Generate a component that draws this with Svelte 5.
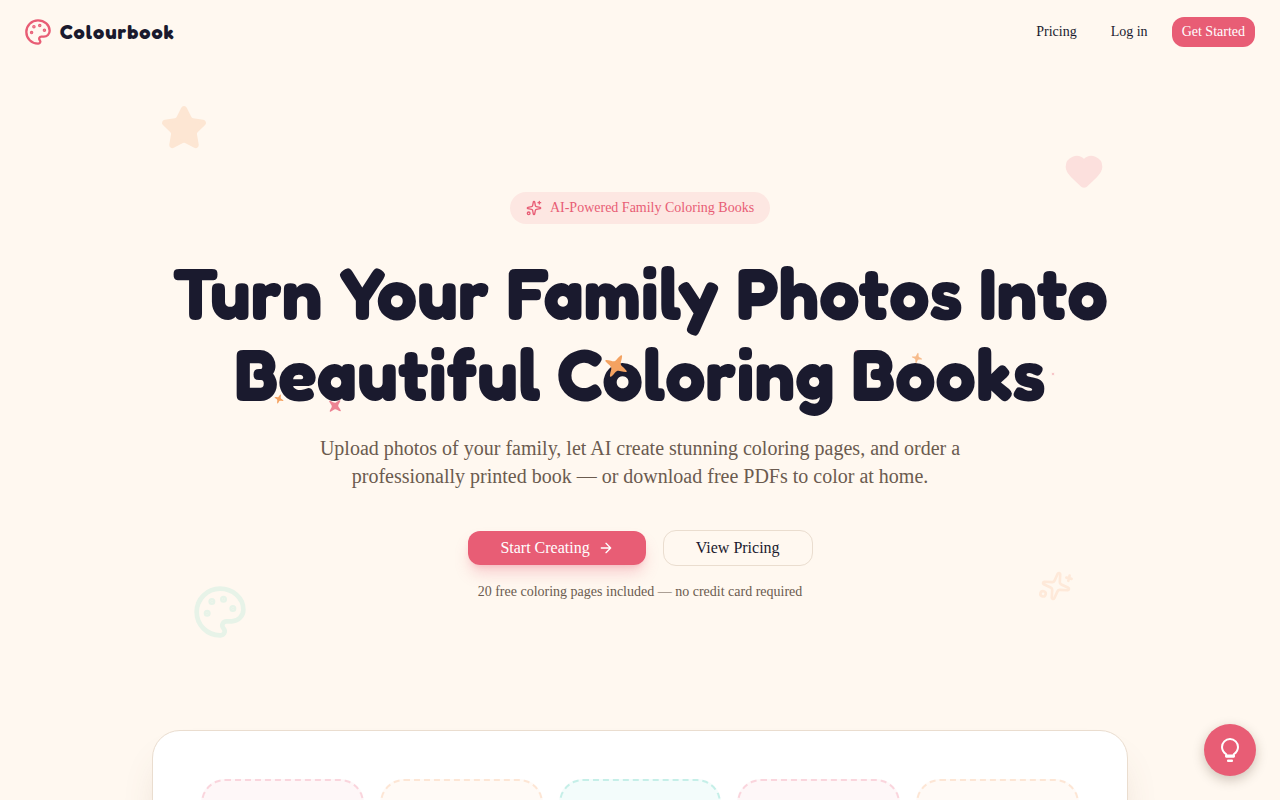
<script lang="ts">
    type Sparkle = {
        x: number
        y: number
        size: number
        angle: number
        tone: string
        opacity: number
    }

    // positions are percentages of the heading box
    const sparkles: Sparkle[] = [
        { x: 47.5, y: 70.4, size: 25, angle: 28, tone: "orange", opacity: 1 },
        { x: 13, y: 90.8, size: 10, angle: 20, tone: "orange", opacity: 1 },
        { x: 18.8, y: 95.1, size: 16, angle: 42, tone: "pink", opacity: 0.75 },
        { x: 78.4, y: 65.5, size: 11, angle: 12, tone: "orange", opacity: 0.7 },
        { x: 92.3, y: 75, size: 4, angle: 45, tone: "pink", opacity: 0.35 },
        { x: 72.1, y: 61.2, size: 3, angle: 45, tone: "pink", opacity: 0.4 },
    ]

    const pages = ["pink", "orange", "mint", "pink", "orange"]
</script>

{#snippet palette()}
    <svg class="palette" viewBox="0 0 24 24" aria-hidden="true">
        <path
            d="M12 22a1 1 0 0 1 0-20 10 9 0 0 1 10 9 5 5 0 0 1-5 5h-2.25a1.75 1.75 0 0 0-1.4 2.8l.3.4a1.75 1.75 0 0 1-1.4 2.8z"
        />
        <circle class="dot" cx="13.5" cy="6.5" r=".5" />
        <circle class="dot" cx="17.5" cy="10.5" r=".5" />
        <circle class="dot" cx="6.5" cy="12.5" r=".5" />
        <circle class="dot" cx="8.5" cy="7.5" r=".5" />
    </svg>
{/snippet}

{#snippet sparklesIcon()}
    <svg viewBox="0 0 24 24" aria-hidden="true">
        <path
            d="M11.017 2.814a1 1 0 0 1 1.966 0l1.051 5.558a2 2 0 0 0 1.594 1.594l5.558 1.051a1 1 0 0 1 0 1.966l-5.558 1.051a2 2 0 0 0-1.594 1.594l-1.051 5.558a1 1 0 0 1-1.966 0l-1.051-5.558a2 2 0 0 0-1.594-1.594l-5.558-1.051a1 1 0 0 1 0-1.966l5.558-1.051a2 2 0 0 0 1.594-1.594z"
        />
        <path d="M20 2v4M22 4h-4" />
        <circle cx="4" cy="20" r="2" />
    </svg>
{/snippet}

<header>
    <a class="logo" href="/">
        {@render palette()}
        <span>Colourbook</span>
    </a>
    <nav>
        <a class="btn small" href="/pricing">Pricing</a>
        <a class="btn small" href="/login">Log in</a>
        <a class="btn small primary" href="/signup">Get Started</a>
    </nav>
</header>

<main>
    <section class="hero">
        <div class="float star">
            <svg viewBox="0 0 24 24" aria-hidden="true">
                <path
                    d="M11.525 2.295a.53.53 0 0 1 .95 0l2.31 4.679a2.123 2.123 0 0 0 1.595 1.16l5.166.756a.53.53 0 0 1 .294.904l-3.736 3.638a2.123 2.123 0 0 0-.611 1.878l.882 5.14a.53.53 0 0 1-.771.56l-4.618-2.428a2.122 2.122 0 0 0-1.973 0L6.396 21.01a.53.53 0 0 1-.77-.56l.881-5.139a2.122 2.122 0 0 0-.611-1.879L2.16 9.795a.53.53 0 0 1 .294-.906l5.165-.755a2.122 2.122 0 0 0 1.597-1.16z"
                />
            </svg>
        </div>
        <div class="float heart">
            <svg viewBox="0 0 24 24" aria-hidden="true">
                <path
                    d="M2 9.5a5.5 5.5 0 0 1 9.591-3.676.56.56 0 0 0 .818 0A5.49 5.49 0 0 1 22 9.5c0 2.29-1.5 4-3 5.5l-5.492 5.313a2 2 0 0 1-3 .019L5 15c-1.5-1.5-3-3.2-3-5.5"
                />
            </svg>
        </div>
        <div class="float paint">{@render palette()}</div>
        <div class="float shine">{@render sparklesIcon()}</div>

        <div class="badge">
            {@render sparklesIcon()}
            <span>AI-Powered Family Coloring Books</span>
        </div>

        <h1>
            Turn Your Family Photos Into <br />Beautiful Coloring Books
            {#each sparkles as s}
                <svg
                    class="sparkle {s.tone}"
                    viewBox="0 0 21 21"
                    aria-hidden="true"
                    style="left: {s.x}%; top: {s.y}%; width: {s.size}px; height: {s.size}px; opacity: {s.opacity}; rotate: {s.angle}deg"
                >
                    <path
                        d="M9.825.844c.23-.629 1.12-.629 1.35 0l.687 1.876C12.4 4.192 12.392 6.392 13.5 7.5s3.308 1.1 4.78 1.638l1.876.687c.63.23.63 1.12 0 1.35l-1.876.687c-1.472.538-3.672.53-4.78 1.638s-1.1 3.308-1.638 4.78l-.687 1.876c-.23.63-1.12.63-1.35 0l-.687-1.876C8.6 16.808 8.608 14.608 7.5 13.5s-3.308-1.1-4.78-1.638l-1.876-.687c-.629-.23-.629-1.12 0-1.35l1.876-.687C4.192 8.6 6.392 8.608 7.5 7.5s1.1-3.308 1.638-4.78z"
                    />
                </svg>
            {/each}
        </h1>

        <p class="lead">
            Upload photos of your family, let AI create stunning coloring pages,
            and order a professionally printed book — or download free PDFs to
            color at home.
        </p>

        <div class="actions">
            <a class="btn large primary raised" href="/signup">
                Start Creating
                <svg viewBox="0 0 24 24" aria-hidden="true">
                    <path d="M5 12h14M12 5l7 7-7 7" />
                </svg>
            </a>
            <a class="btn large outline" href="/pricing">View Pricing</a>
        </div>
        <p class="note">
            20 free coloring pages included — no credit card required
        </p>
    </section>

    <section class="preview">
        <div class="book">
            {#each pages as tone}
                <div class="page {tone}"></div>
            {/each}
        </div>
    </section>
</main>

<button class="tips" aria-label="Tips">
    <svg viewBox="0 0 28 28" aria-hidden="true">
        <path
            d="M10.2 20.5v-2.2C7.5 16.4 6 14.4 6 11a8 8 0 0 1 16 0c0 3.4-1.5 5.4-4.2 7.3v2.2z"
        />
        <rect x="9.2" y="18.4" width="9.6" height="3.2" rx="1" />
        <rect x="11" y="23.6" width="6" height="2.4" rx="1" />
    </svg>
</button>

<style>
    :global(body) {
        margin: 0;
        background: #fff8f0;
        color: #1a1a2e;
        font-family: "Liberation Serif", serif;
        overflow-x: hidden;
    }

    svg {
        display: block;
        fill: none;
        stroke: currentColor;
        stroke-width: 2;
        stroke-linecap: round;
        stroke-linejoin: round;
    }

    .dot {
        fill: currentColor;
    }

    header {
        display: flex;
        align-items: center;
        justify-content: space-between;
        height: 64px;
        padding: 0 24px;
    }

    .logo {
        display: flex;
        align-items: center;
        gap: 8px;
        color: #1a1a2e;
        font-family: Fredoka, Inter, sans-serif;
        font-size: 20px;
        font-weight: 700;
        letter-spacing: 0.05em;
        line-height: 28px;
        text-decoration: none;
    }

    .logo .palette {
        width: 28px;
        height: 28px;
        color: #e85d75;
    }

    nav {
        display: flex;
        gap: 12px;
    }

    .btn {
        display: flex;
        align-items: center;
        box-sizing: border-box;
        border: 1px solid transparent;
        border-radius: 13px;
        background-clip: padding-box;
        color: #1a1a2e;
        text-decoration: none;
        white-space: nowrap;
    }

    .small {
        height: 32px;
        padding: 0 10px;
        font-size: 14px;
    }

    .large {
        height: 36px;
        padding: 0 32px;
        gap: 8px;
        font-size: 16px;
    }

    .large svg {
        width: 16px;
        height: 16px;
    }

    .primary {
        background-color: #e85d75;
        color: #fff;
    }

    .raised {
        box-shadow:
            0 10px 15px -3px rgba(232, 93, 117, 0.25),
            0 4px 6px -4px rgba(232, 93, 117, 0.25);
    }

    .outline {
        border-color: #eaddcf;
    }

    .hero {
        position: relative;
        display: flex;
        flex-direction: column;
        align-items: center;
        padding: 128px 24px;
        text-align: center;
    }

    .float {
        position: absolute;
    }

    .star {
        top: 40px;
        left: 12.5%;
        width: 48px;
        color: #fde6d3;
    }

    .heart {
        top: 87px;
        right: 13.75%;
        width: 40px;
        color: #fce0dd;
    }

    .star svg,
    .heart svg {
        fill: currentColor;
    }

    .paint {
        bottom: 90px;
        left: 15%;
        width: 56px;
        color: #e7f3e8;
    }

    .shine {
        bottom: 128px;
        right: 16.25%;
        width: 32px;
        color: #fee9d9;
        rotate: 14deg;
    }

    .badge {
        display: flex;
        align-items: center;
        gap: 8px;
        padding: 6px 16px;
        border-radius: 16px;
        background: #fde7e2;
        color: #e85d75;
        font-size: 14px;
        line-height: 20px;
    }

    .badge svg {
        width: 16px;
        height: 16px;
    }

    h1 {
        position: relative;
        box-sizing: border-box;
        width: 100%;
        max-width: 976px;
        margin: 28px 0 20px;
        font-family: Fredoka, Inter, sans-serif;
        font-size: 72px;
        font-weight: 700;
        line-height: 81px;
    }

    .sparkle {
        position: absolute;
        translate: -50% -50%;
        fill: currentColor;
        stroke: none;
    }

    .sparkle.orange {
        color: #f4a261;
    }

    .sparkle.pink {
        color: #e85d75;
    }

    .lead {
        max-width: 672px;
        margin: 0 0 40px;
        color: #6b5b4f;
        font-size: 20px;
        line-height: 28px;
    }

    .actions {
        display: flex;
        flex-wrap: wrap;
        justify-content: center;
        gap: 16px;
    }

    .note {
        margin: 16px 0 0;
        color: #6b5b4f;
        font-size: 14px;
        line-height: 20px;
    }

    .preview {
        max-width: 976px;
        margin: 0 auto;
        padding: 0 24px 96px;
    }

    .book {
        display: grid;
        grid-template-columns: repeat(5, 1fr);
        gap: 16px;
        padding: 48px;
        border: 1px solid #eaddcf;
        border-radius: 28px;
        background: #fff;
        box-shadow: 0 25px 40px -12px rgba(120, 80, 60, 0.2);
    }

    .page {
        aspect-ratio: 3 / 4;
        border: 2px dashed;
        border-radius: 24px;
    }

    .page.pink {
        border-color: #fad5dd;
        background: #fef7f8;
    }

    .page.orange {
        border-color: #fde6d5;
        background: #fffaf6;
    }

    .page.mint {
        border-color: #c5efe8;
        background: #f3fcfb;
    }

    .tips {
        position: fixed;
        right: 24px;
        bottom: 24px;
        display: flex;
        align-items: center;
        justify-content: center;
        width: 52px;
        height: 52px;
        padding: 0;
        border: 0;
        border-radius: 50%;
        background: #e85d75;
        color: #fff;
        box-shadow: 0 4px 12px rgba(60, 40, 20, 0.25);
        cursor: pointer;
    }

    .tips svg {
        width: 28px;
        height: 28px;
    }

    .tips rect {
        fill: currentColor;
        stroke: none;
    }
</style>
